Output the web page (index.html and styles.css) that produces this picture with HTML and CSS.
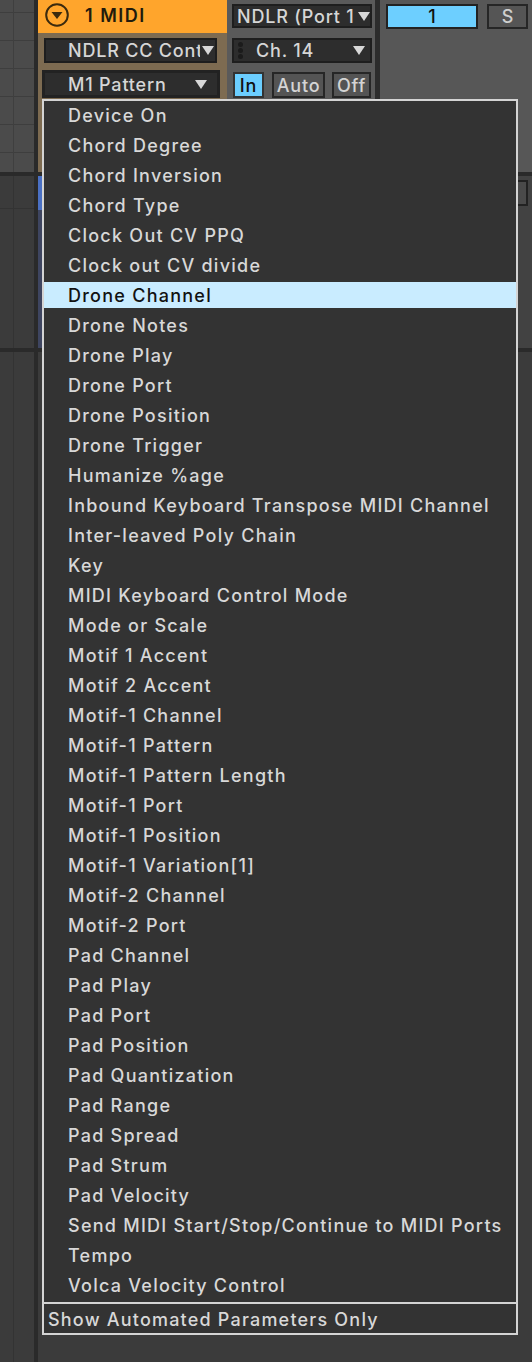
FILE: index.html
```html
<!DOCTYPE html>
<html>
<head>
<meta charset="utf-8">
<link rel="stylesheet" href="styles.css">
</head>
<body>
<div class="screen">
  <div class="row top">
    <div class="ruler ruler-top"></div>
    <div class="div-bar"></div>
    <div class="track">
      <div class="track-title">
        <svg class="fold" width="24" height="24" viewBox="0 0 24 24"><circle cx="12" cy="12" r="10.8" fill="none" stroke="#3b2a0e" stroke-width="2"/><path d="M6.5 9 L17.5 9 L12 16 Z" fill="#3b2a0e"/></svg>
        <span class="track-name">1 MIDI</span>
      </div>
      <div class="track-body">
        <div class="sel sel-device"><span class="sel-text">NDLR CC Control</span><svg class="tri" width="12" height="9" viewBox="0 0 12 9"><path d="M0 0 H12 L6 9 Z" fill="#d8d8d8"/></svg></div>
        <div class="sel sel-param"><span class="sel-text">M1 Pattern</span><svg class="tri" width="12" height="9" viewBox="0 0 12 9"><path d="M0 0 H12 L6 9 Z" fill="#d8d8d8"/></svg></div>
      </div>
    </div>
    <div class="io">
      <div class="sel io-port"><span class="sel-text">NDLR (Port 1)</span><svg class="tri" width="12" height="9" viewBox="0 0 12 9"><path d="M0 0 H12 L6 9 Z" fill="#d8d8d8"/></svg></div>
      <div class="sel io-ch"><span class="dots"><i></i><i></i><i></i></span><span class="sel-text">Ch. 14</span><svg class="tri" width="12" height="9" viewBox="0 0 12 9"><path d="M0 0 H12 L6 9 Z" fill="#d8d8d8"/></svg></div>
      <div class="monitor">
        <span class="mon mon-in">In</span>
        <span class="mon mon-auto">Auto</span>
        <span class="mon mon-off">Off</span>
      </div>
    </div>
    <div class="vbar"></div>
    <div class="mix">
      <span class="num">1</span>
      <span class="solo">S</span>
    </div>
  </div>
  <div class="hband"></div>
  <div class="row second">
    <div class="ruler ruler-second"></div>
    <div class="div-bar"></div>
    <div class="strip"></div>
    <div class="lane"><span class="lane-box"></span></div>
  </div>
  <div class="hband"></div>
  <div class="row bottom">
    <div class="ruler ruler-bottom"></div>
    <div class="div-bar"></div>
    <div class="lane"></div>
  </div>

  <div class="menu">
    <ul class="menu-list">
      <li>Device On</li>
      <li>Chord Degree</li>
      <li>Chord Inversion</li>
      <li>Chord Type</li>
      <li>Clock Out CV PPQ</li>
      <li>Clock out CV divide</li>
      <li class="active">Drone Channel</li>
      <li>Drone Notes</li>
      <li>Drone Play</li>
      <li>Drone Port</li>
      <li>Drone Position</li>
      <li>Drone Trigger</li>
      <li>Humanize %age</li>
      <li>Inbound Keyboard Transpose MIDI Channel</li>
      <li>Inter-leaved Poly Chain</li>
      <li>Key</li>
      <li>MIDI Keyboard Control Mode</li>
      <li>Mode or Scale</li>
      <li>Motif 1 Accent</li>
      <li>Motif 2 Accent</li>
      <li>Motif-1 Channel</li>
      <li>Motif-1 Pattern</li>
      <li>Motif-1 Pattern Length</li>
      <li>Motif-1 Port</li>
      <li>Motif-1 Position</li>
      <li>Motif-1 Variation[1]</li>
      <li>Motif-2 Channel</li>
      <li>Motif-2 Port</li>
      <li>Pad Channel</li>
      <li>Pad Play</li>
      <li>Pad Port</li>
      <li>Pad Position</li>
      <li>Pad Quantization</li>
      <li>Pad Range</li>
      <li>Pad Spread</li>
      <li>Pad Strum</li>
      <li>Pad Velocity</li>
      <li>Send MIDI Start/Stop/Continue to MIDI Ports</li>
      <li>Tempo</li>
      <li>Volca Velocity Control</li>
    </ul>
    <div class="menu-footer">Show Automated Parameters Only</div>
  </div>
</div>
</body>
</html>
```
FILE: styles.css
```css
* { box-sizing: border-box; }
html, body { margin: 0; padding: 0; background: #3a3a3a; }
.screen {
  position: relative;
  width: 532px;
  height: 1362px;
  overflow: hidden;
  background: #3a3a3a;
  font-family: Inter, "Noto Sans", "DejaVu Sans", sans-serif;
  font-weight: 500;
}
.row { display: flex; }
.top { height: 172px; }
.second { height: 172px; }
.bottom { height: 1010px; }
.hband { height: 4px; background: #2a2a2a; }

.ruler { width: 34px; flex: none; }
.ruler-top {
  background:
    linear-gradient(to right, transparent 13px, #3f3f3f 13px, #3f3f3f 14px, transparent 14px),
    repeating-linear-gradient(to bottom, #4b4b4b 0 12px, #3e3e3e 12px 13px, #4b4b4b 13px 28px);
}
.ruler-second {
  background:
    linear-gradient(to right, transparent 13px, #333 13px, #333 14px, transparent 14px),
    linear-gradient(to bottom, #3b3b3b 0 32px, #333 32px 33px, #3b3b3b 33px);
}
.ruler-bottom {
  background:
    linear-gradient(to right, #3b3b3b 13px, #333 13px, #333 14px, #3b3b3b 14px);
}
.div-bar { width: 4px; flex: none; background: #2a2a2a; }

/* track header */
.track { width: 189px; flex: none; display: flex; flex-direction: column; }
.track-title {
  height: 33px;
  background: #ffa52c;
  display: flex;
  align-items: center;
  padding-left: 7px;
  gap: 16px;
}
.fold { display: block; margin-top: -3px; }
.track-name { font-size: 18px; font-weight: 600; color: #231b0c; letter-spacing: 1.5px; margin-top: -2px; }
.track-body { flex: 1; background: #7d6b51; padding-top: 5px; }

.sel {
  display: flex;
  align-items: center;
  background: #2d2d2d;
  border: 2px solid #1e1e1e;
  color: #d6d6d6;
  font-size: 18px;
  white-space: nowrap;
}
.sel-text { overflow: hidden; display: block; letter-spacing: 0.8px; }
.tri { display: block; flex: none; }

.sel-device { margin-left: 6px; width: 173px; height: 25px; padding-left: 22px; }
.sel-device .sel-text { width: 132px; }
.sel-device .tri { margin-left: 2px; }
.sel-param { margin-left: 4px; margin-top: 7px; width: 178px; height: 28px; padding-left: 23px; border-width: 3px; border-color: #222; }
.sel-param .sel-text { flex: 1; }
.sel-param .tri { margin-right: 10px; }

/* io column */
.io { width: 148px; flex: none; background: #5a5a5a; padding: 4px 0 0 5px; }
.io-port { width: 140px; height: 24px; padding-left: 3px; }
.io-port .sel-text { width: 118px; }
.io-port .tri { margin-left: 3px; }
.io-ch { width: 140px; height: 25px; margin-top: 10px; padding-left: 4px; }
.dots { display: flex; flex-direction: column; gap: 1px; width: 7px; margin-right: 11px; }
.dots i { display: block; width: 5px; height: 5px; border-radius: 50%; background: #1b1b1b; }
.io-ch .sel-text { flex: 1; }
.io-ch .tri { margin-right: 5px; }

.monitor { display: flex; margin-top: 9px; height: 26px; }
.mon {
  display: flex; align-items: center; justify-content: center;
  height: 26px;
  border: 2px solid #262626;
  background: #545454;
  color: #d4d4d4;
  font-size: 18px;
  letter-spacing: 0.8px;
}
.mon-in { width: 31px; margin-left: 1px; background: #6bceff; color: #111; border-color: #333; }
.mon-auto { width: 53px; margin-left: 8px; }
.mon-off { width: 39px; margin-left: 7px; }

.vbar { width: 5px; flex: none; background: #2c2c2c; }
.mix { flex: 1; background: #575757; display: flex; align-items: flex-start; padding: 4px 0 0 6px; }
.num {
  display: flex; align-items: center; justify-content: center;
  width: 92px; height: 25px;
  background: #6dcfff; border: 2px solid #222; color: #111; font-size: 18px;
}
.solo {
  display: flex; align-items: center; justify-content: center;
  width: 41px; height: 25px; margin-left: 9px;
  background: #555; border: 2px solid #262626; color: #cfcfcf; font-size: 18px;
}

.strip {
  width: 4px; flex: none;
  background: linear-gradient(to bottom, #4a70c4 0 34px, #3e4560 34px);
}
.lane { flex: 1; background: #424242; position: relative; }
.bottom .lane { background: #3b3b3b; }
.lane-box {
  position: absolute; right: 4px; top: 4px;
  width: 60px; height: 26px;
  background: #4a4a4a; border: 2px solid #222;
}

/* dropdown menu */
.menu {
  position: absolute;
  left: 42px; top: 99px;
  width: 476px; height: 1236px;
  border: 2px solid #d4d4d4;
  background: #333333;
  color: #d8d8d8;
  font-size: 18px;
}
.menu-list { list-style: none; margin: 0; padding: 1px 0 0; }
.menu-list li {
  height: 26px;
  line-height: 28px;
  margin-bottom: 4px;
  padding-left: 24px;
  white-space: nowrap;
  letter-spacing: 1.25px;
}
.menu-list li.active { background: #c9ecff; color: #121212; }
.menu-footer {
  border-top: 2px solid #d4d4d4;
  height: 31px;
  line-height: 32px;
  padding-left: 4px;
  letter-spacing: 1.2px;
}
```
